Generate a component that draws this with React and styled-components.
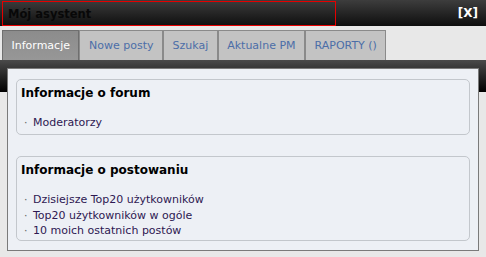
import styled, { createGlobalStyle } from "styled-components";

const GlobalStyle = createGlobalStyle`
  html, body {
    margin: 0;
    padding: 0;
    background: #e8e8e8;
    font-family: "DejaVu Sans", Verdana, sans-serif;
  }
`;

const Window = styled.div`
  width: 486px;
  height: 257px;
  display: flex;
  flex-direction: column;
  background: #e8e8e8;
  overflow: hidden;
`;

const Header = styled.div`
  height: 26px;
  display: flex;
  align-items: center;
  justify-content: space-between;
  background: linear-gradient(#3d3d3d, #0e0e0e);
  box-sizing: border-box;
  padding-right: 8px;
`;

const TitleBox = styled.div`
  width: 334px;
  height: 25px;
  margin: 1px 0 0 2px;
  box-sizing: border-box;
  border: 1px solid #e60000;
  display: flex;
  align-items: center;
  padding-left: 5px;
  font-size: 11.5px;
  font-weight: bold;
  color: #080808;
`;

const Close = styled.span`
  font-size: 12px;
  font-weight: bold;
  color: #ffffff;
`;

const TabRow = styled.div`
  display: flex;
  padding: 4px 0 0 2px;
  height: 30px;
`;

const Tab = styled.div`
  box-sizing: border-box;
  height: 30px;
  display: flex;
  align-items: center;
  padding: 0 8.5px;
  font-size: 11px;
  border: 1px solid ${(p) => (p.$active ? "#6f6f6f" : "#8a8a8a")};
  border-bottom: none;
  background: ${(p) => (p.$active ? "linear-gradient(#8c8c8c, #979797)" : "#c3c3c3")};
  color: ${(p) => (p.$active ? "#ffffff" : "#4c6ea8")};
`;

const Stage = styled.div`
  flex: 1;
  display: flex;
  padding: 8px 7px 6px 7px;
  background: linear-gradient(#4a4a4a, #000000) no-repeat;
  background-size: 100% 32px;
`;

const Panel = styled.div`
  flex: 1;
  box-sizing: border-box;
  border: 1px solid #7a7a7a;
  background: #edf0f5;
  padding: 10px 8px 0 8px;
  display: flex;
  flex-direction: column;
  gap: 21px;
`;

const Box = styled.div`
  box-sizing: border-box;
  height: ${(p) => p.$h}px;
  border: 1px solid #c3c7cc;
  border-radius: 5px;
  padding: 5px 0 0 4px;
`;

const BoxTitle = styled.div`
  font-size: 12px;
  font-weight: bold;
  line-height: 16px;
  color: #000000;
  margin-bottom: 14px;
`;

const Item = styled.div`
  display: flex;
  font-size: 11px;
  line-height: 15.5px;
  color: #2e1852;
`;

const Bullet = styled.span`
  box-sizing: border-box;
  width: 12px;
  padding-left: 3px;
  color: #666;
`;

const boxes = [
  { title: "Informacje o forum", h: 56, items: ["Moderatorzy"] },
  {
    title: "Informacje o postowaniu",
    h: 85,
    items: [
      "Dzisiejsze Top20 użytkowników",
      "Top20 użytkowników w ogóle",
      "10 moich ostatnich postów",
    ],
  },
];

const tabs = ["Informacje", "Nowe posty", "Szukaj", "Aktualne PM", "RAPORTY ()"];

export default function App() {
  return (
    <Window>
      <GlobalStyle />
      <Header>
        <TitleBox>Mój asystent</TitleBox>
        <Close>[X]</Close>
      </Header>
      <TabRow>
        {tabs.map((t, i) => (
          <Tab key={t} $active={i === 0}>
            {t}
          </Tab>
        ))}
      </TabRow>
      <Stage>
        <Panel>
          {boxes.map((b) => (
            <Box key={b.title} $h={b.h}>
              <BoxTitle>{b.title}</BoxTitle>
              {b.items.map((it) => (
                <Item key={it}>
                  <Bullet>·</Bullet>
                  {it}
                </Item>
              ))}
            </Box>
          ))}
        </Panel>
      </Stage>
    </Window>
  );
}
